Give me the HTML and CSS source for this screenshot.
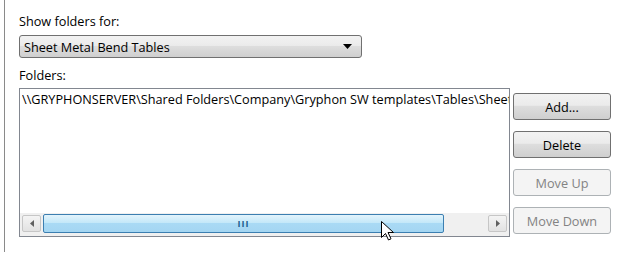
FILE: index.html
```html
<!DOCTYPE html>
<html lang="en">
<head>
  <meta charset="UTF-8">
  <title>Folder Options</title>
  <link rel="stylesheet" href="styles.css">
</head>
<body>
  <div class="panel">
    <label class="caption" for="cboShowFor">Show folders for:</label>
    <div class="select" id="cboShowFor">
      <span>Sheet Metal Bend Tables</span>
      <svg class="select-arrow" width="9" height="5" viewBox="0 0 9 5"><path d="M0 0h9L4.5 5z" fill="#000"/></svg>
    </div>

    <label class="caption folders-caption">Folders:</label>
    <div class="folders-row">
      <div class="listbox">
        <div class="list-items">
          <div class="list-item">\\GRYPHONSERVER\Shared Folders\Company\Gryphon SW templates\Tables\Sheet Metal Bend Tables</div>
        </div>
        <!-- horizontal scrollbar -->
        <div class="hscroll">
          <div class="scroll-btn">
            <svg width="4" height="7" viewBox="0 0 4 7"><path d="M4 0v7L0 3.5z" fill="#606060"/></svg>
          </div>
          <div class="scroll-thumb"><span class="grip">III</span></div>
          <div class="scroll-track"></div>
          <div class="scroll-btn">
            <svg width="4" height="7" viewBox="0 0 4 7"><path d="M0 0v7L4 3.5z" fill="#606060"/></svg>
          </div>
        </div>
        <svg class="cursor" width="13" height="20" viewBox="0 0 13 20">
          <path d="M0.5 0.5v16l4-4 3 6.5 2.5-1.2-3-6.3h5.5z" fill="#fff" stroke="#000" stroke-width="1"/>
        </svg>
      </div>

      <div class="buttons">
        <button type="button">Add...</button>
        <button type="button">Delete</button>
        <button type="button" disabled>Move Up</button>
        <button type="button" disabled>Move Down</button>
      </div>
    </div>
  </div>
</body>
</html>
```

FILE: styles.css
```css
body {
  margin: 0;
  font-family: "Open Sans", "Noto Sans", Arial, sans-serif;
  font-size: 12.7px;
  color: #000;
  background: #fff;
}
.panel {
  margin-left: 4px;
  height: 252px;
  border-left: 1px solid #8a8a8a;
  padding: 13px 0 0 14px;
  box-sizing: border-box;
}
.caption {
  display: block;
  line-height: 17px;
  height: 17px;
}
.select {
  margin-top: 5px;
  width: 343px;
  height: 23px;
  box-sizing: border-box;
  border: 1px solid #707070;
  border-radius: 3px;
  background: linear-gradient(#f2f2f2 0%, #ebebeb 45%, #dddddd 50%, #cfcfcf 100%);
  display: flex;
  align-items: center;
  justify-content: space-between;
  padding: 0 9px 0 4px;
}
.select span {
  line-height: 16px;
}
.folders-caption {
  margin-top: 9px;
}
.folders-row {
  display: flex;
  margin-top: 4px;
}
.listbox {
  position: relative;
  width: 491px;
  height: 149px;
  box-sizing: border-box;
  border: 1px solid #828790;
  display: flex;
  flex-direction: column;
}
.list-items {
  flex: 1;
  overflow: hidden;
  padding: 2px 0 0 2px;
}
.list-item {
  white-space: nowrap;
  overflow: hidden;
  line-height: 17px;
}
.hscroll {
  height: 21px;
  display: flex;
  align-items: center;
  background: #f0f0f0;
  padding: 0 2px 2px 2px;
}
.scroll-btn {
  width: 19px;
  height: 17px;
  box-sizing: border-box;
  border: 1px solid #c6c6c6;
  border-radius: 2px;
  background: linear-gradient(#f4f4f4, #e2e2e2);
  display: flex;
  align-items: center;
  justify-content: center;
}
.scroll-thumb {
  margin-left: 2px;
  width: 401px;
  height: 19px;
  box-sizing: border-box;
  border: 1px solid #3c7fb1;
  border-radius: 2px;
  background: linear-gradient(#e3f4fc 0%, #c4e8f9 45%, #a9daf5 50%, #a4d6f2 100%);
  display: flex;
  align-items: center;
  justify-content: center;
}
.grip {
  font-size: 9px;
  font-weight: bold;
  color: #1c5c8c;
  letter-spacing: 1px;
  line-height: 9px;
}
.scroll-track {
  flex: 1;
}
.cursor {
  position: absolute;
  left: 361px;
  top: 132px;
}
.buttons {
  display: flex;
  flex-direction: column;
  gap: 11px;
  margin-left: 3px;
  padding-top: 5px;
}
button {
  width: 98px;
  height: 27px;
  box-sizing: border-box;
  font-family: inherit;
  font-size: 12.7px;
  color: #000;
  border: 1px solid #707070;
  border-radius: 3px;
  background: linear-gradient(#f2f2f2 0%, #ebebeb 45%, #dddddd 50%, #cfcfcf 100%);
  padding: 0;
}
button:disabled {
  color: #838383;
  border-color: #adb2b5;
  background: #f4f4f4;
}
```
